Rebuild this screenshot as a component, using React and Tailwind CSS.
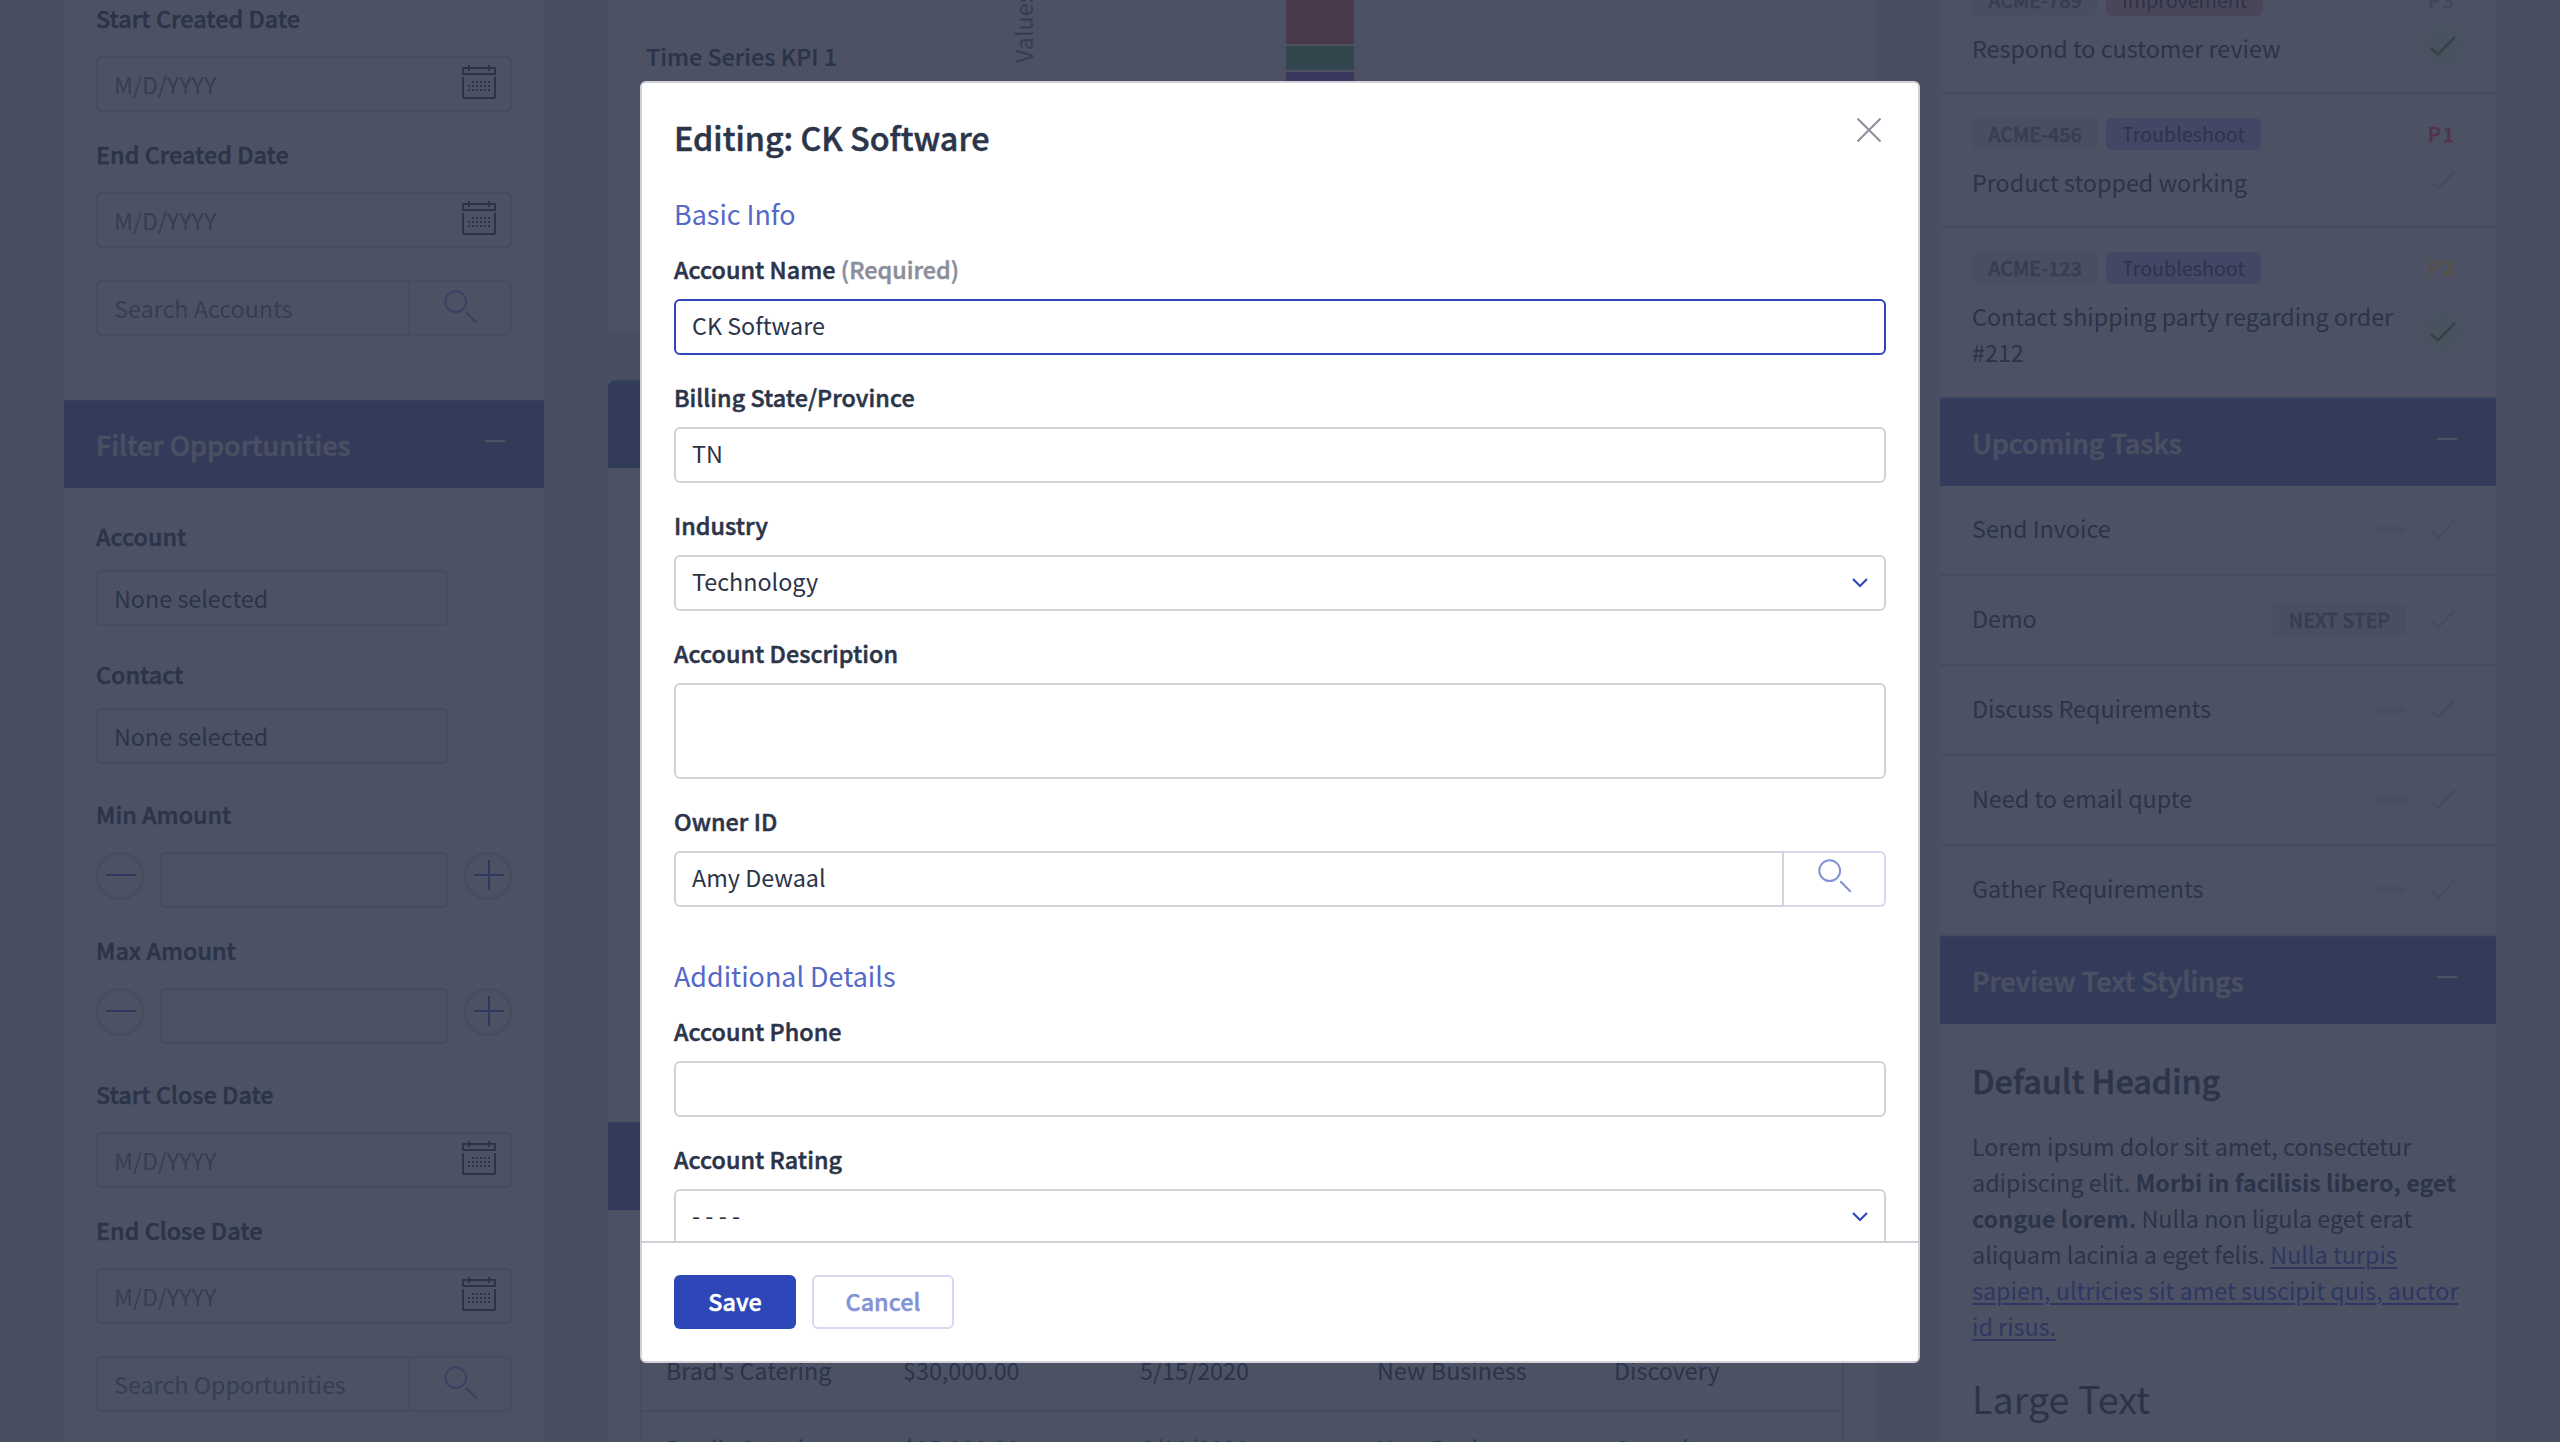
const semi = 'font-medium tracking-[0.04px] [-webkit-text-stroke:0.5px_currentColor]';

function Label({ children, className = '' }) {
  return <div className={`h-8 shrink-0 leading-8 text-[#2b3449] ${semi} ${className}`}>{children}</div>;
}

function CalendarIcon() {
  const dots = [7, 11, 15, 19, 23, 27];
  return (
    <svg width="34" height="34" viewBox="0 0 34 34" fill="none" stroke="#2b3449" strokeWidth="2" className="mb-1">
      <path d="M1 3h32v6H1zM7 0v6M27 0v6M1 12v20.2a.8.8 0 0 0 .8.8h30.4a.8.8 0 0 0 .8-.8V12" />
      <g fill="#2b3449" stroke="none">
        {[17, 21, 25].map((y, r) =>
          dots.slice(r === 0 ? 1 : 0).map((x) => <rect key={`${x}-${y}`} x={x - 1} y={y - 1} width="2" height="2" />)
        )}
      </g>
    </svg>
  );
}

function SearchIcon({ color, className = '' }) {
  return (
    <svg width="34" height="34" viewBox="0 0 34 34" fill="none" stroke={color} strokeWidth="2" strokeLinecap="round" className={className}>
      <circle cx="11.7" cy="11.7" r="10.4" />
      <path d="M22.8 22.8l9.4 9.4" />
    </svg>
  );
}

function Check({ color }) {
  return (
    <svg width="26" height="20" viewBox="0 0 26 20" fill="none" stroke={color} strokeWidth="2.6">
      <path d="M1 12l7 6.4L25 1" />
    </svg>
  );
}

function DateField({ label }) {
  return (
    <>
      <Label>{label}</Label>
      <div className="mt-[22px] flex h-14 items-center justify-between rounded-[6px] border-2 border-[#464b5f] pl-4 pr-[14px] text-[#363e52]">
        <span>M/D/YYYY</span>
        <CalendarIcon />
      </div>
    </>
  );
}

function SearchField({ text }) {
  return (
    <div className="mt-8 flex h-14">
      <div className="flex w-[314px] items-center rounded-l-[6px] border-2 border-[#464b5f] pl-4 text-[#363e52]">{text}</div>
      <div className="flex flex-1 rounded-r-[6px] border-2 border-l-0 border-[#454d65] pl-[34px] pt-2">
        <SearchIcon color="#3a4264" />
      </div>
    </div>
  );
}

function PickField({ label }) {
  return (
    <>
      <Label>{label}</Label>
      <div className="mt-[18px] flex h-14 w-[352px] items-center rounded-[6px] border-2 border-[#464b5f] pl-4 text-[#2b3449]">None selected</div>
    </>
  );
}

function AmountField({ label }) {
  return (
    <>
      <Label>{label}</Label>
      <div className="mt-[22px] flex justify-between">
        <div className="size-12 rounded-full border-2 border-[#464b5f] pl-2 pt-2">
          <svg width="30" height="30" viewBox="0 0 30 30" stroke="#2e3760" strokeWidth="2"><path d="M0 13h30" /></svg>
        </div>
        <div className="h-14 w-72 rounded-[6px] border-2 border-[#464b5f]" />
        <div className="size-12 rounded-full border-2 border-[#464b5f] pl-2 pt-1.5">
          <svg width="30" height="30" viewBox="0 0 30 30" stroke="#2e3760" strokeWidth="2"><path d="M0 15h30M15 0v30" /></svg>
        </div>
      </div>
    </>
  );
}

function PanelHeader({ title }) {
  return (
    <div className="flex h-[88px] shrink-0 justify-between border-t-2 border-[#343f5f] bg-[#323c5a] pl-8 pr-[39px] pt-[23px]">
      <span className="text-[27px] font-medium leading-10 text-[#4a4f62] [-webkit-text-stroke:0.7px_currentColor]">{title}</span>
      <span className="mt-[15px] h-0.5 w-5 bg-[#4c5264]" />
    </div>
  );
}

function Ticket({ id, tag, tagClass, priority, priorityClass, title, done }) {
  return (
    <div className="flex flex-col border-b-2 border-[#464b5f] pb-[26px] pl-8 pr-8 pt-6">
      <div className="flex h-8 text-[19.7px] leading-8">
        <span className="w-[126px] rounded-[6px] bg-[#494e61] text-center font-medium text-[#363e52] [-webkit-text-stroke:0.5px_currentColor]">{id}</span>
        <span className={`ml-2 rounded-[6px] px-4 text-[#2b3449] ${tagClass}`}>{tag}</span>
        <span className={`ml-auto mr-2 font-medium tracking-[2px] [-webkit-text-stroke:0.5px_currentColor] ${priorityClass}`}>{priority}</span>
      </div>
      <div className="mt-[14px] flex items-center justify-between leading-9 text-[#2b3449]">
        <span className="w-[440px]">{title}</span>
        <div className={`-mb-2 -mt-3 flex h-10 w-[42px] items-center justify-center rounded-full ${done ? 'bg-[#48535f]' : ''}`}>
          <Check color={done ? '#334448' : '#464b5f'} />
        </div>
      </div>
    </div>
  );
}

function Task({ title, tag }) {
  return (
    <div className="flex h-[90px] items-center border-b-2 border-[#464b5f] pl-8 pr-8 text-[#2b3449]">
      <span className="mb-1 flex-1 leading-9">{title}</span>
      {tag ? (
        <span className="h-8 rounded-[6px] bg-[#494e61] px-4 text-[19.5px] font-medium leading-8 text-[#363e52] [-webkit-text-stroke:0.5px_currentColor]">{tag}</span>
      ) : (
        <span className="h-2 w-8 rounded-[4px] bg-[#494e61]" />
      )}
      <span className="mb-0.5 ml-4 flex w-[42px] justify-center"><Check color="#464b5f" /></span>
    </div>
  );
}

function Row({ cells }) {
  return (
    <div className="flex h-[78px] shrink-0 border-b-2 border-[#464b5f] pl-6 pt-[18px] leading-9 text-[#2b3449]">
      {cells.map((c) => <span key={c} className="w-[237px] shrink-0">{c}</span>)}
    </div>
  );
}

function Chevron() {
  return (
    <svg width="16" height="10" viewBox="0 0 16 10" fill="none" stroke="#3049b9" strokeWidth="2.2" className="mt-1"><path d="M1 1l7 7 7-7" /></svg>
  );
}

function Field({ label, required, value, focus, select, className = 'mt-[26px]' }) {
  return (
    <div className={`shrink-0 ${className}`}>
      <Label>
        {label}
        {required && <span className="text-[#8b8e9b]"> (Required)</span>}
      </Label>
      <div className={`mt-[14px] flex h-14 items-center justify-between rounded-[6px] border-2 pb-1 pl-4 pr-4 ${focus ? 'border-[#2d47b9]' : 'border-[#d2d2d9]'}`}>
        <span>{value}</span>
        {select && <Chevron />}
      </div>
    </div>
  );
}

function Modal() {
  return (
    <div className="absolute left-[640px] top-[81px] flex h-[1282px] w-[1280px] flex-col overflow-hidden rounded-[6px] border-2 border-[#d0d1d8] bg-white text-[#2b3449]">
      <div className="flex min-h-0 flex-1 flex-col overflow-hidden px-8 pt-8">
        <div className="flex h-11 shrink-0 justify-between">
          <h1 className="text-[32.3px] font-medium leading-[44px] [-webkit-text-stroke:0.5px_currentColor]">Editing: CK Software</h1>
          <svg width="24" height="24" viewBox="0 0 24 24" stroke="#8b8e9b" strokeWidth="2" className="mr-[5px] mt-[3px]"><path d="M.5.5l23 23M23.5.5l-23 23" /></svg>
        </div>
        <h2 className="mt-[37px] shrink-0 text-[26.9px] leading-9 text-[#5468c8]">Basic Info</h2>
        <Field label="Account Name" required value="CK Software" focus className="mt-[21px]" />
        <Field label="Billing State/Province" value="TN" />
        <Field label="Industry" value="Technology" select />
        <Label className="mt-[26px]">Account Description</Label>
        <div className="mt-[14px] h-24 shrink-0 rounded-[6px] border-2 border-[#d2d2d9]" />
        <Label className="mt-[26px]">Owner ID</Label>
        <div className="mt-[14px] flex h-14 shrink-0">
          <div className="flex w-[1110px] items-center rounded-l-[6px] border-2 border-[#d2d2d9] pb-1 pl-4">Amy Dewaal</div>
          <div className="flex-1 rounded-r-[6px] border-2 border-l-0 border-[#d5d9ef] pl-[34px] pt-1.5">
            <SearchIcon color="#8492d6" />
          </div>
        </div>
        <h2 className="mt-[51px] shrink-0 text-[26.9px] leading-9 text-[#5468c8]">Additional Details</h2>
        <Field label="Account Phone" className="mt-[21px]" />
        <Field label="Account Rating" value="- - - -" select />
      </div>
      <div className="flex h-[120px] shrink-0 gap-4 border-t-2 border-[#d0d1d8] px-8 pt-8">
        <div className={`h-[54px] w-[122px] rounded-[6px] bg-[#2d47b9] text-center leading-[52px] text-white ${semi}`}>Save</div>
        <div className={`h-[54px] w-[142px] rounded-[6px] border-2 border-[#d5d9ef] text-center leading-[48px] text-[#8492d6] ${semi}`}>Cancel</div>
      </div>
    </div>
  );
}

export default function App() {
  return (
    <div className="relative flex h-[1442px] w-[2560px] gap-16 overflow-hidden bg-[#494e61] px-16 font-['Noto_Sans_CJK_SC','Noto_Sans',sans-serif] text-[23.33px]">
      <aside className="flex w-[480px] shrink-0 flex-col bg-[#4c5264]">
        <div className="h-[400px] shrink-0 px-8 pt-0.5">
          <DateField label="Start Created Date" />
          <div className="h-[26px]" />
          <DateField label="End Created Date" />
          <SearchField text="Search Accounts" />
        </div>
        <PanelHeader title="Filter Opportunities" />
        <div className="px-8 pt-8">
          <PickField label="Account" />
          <div className="h-8" />
          <PickField label="Contact" />
          <div className="h-[34px]" />
          <AmountField label="Min Amount" />
          <div className="h-[26px]" />
          <AmountField label="Max Amount" />
          <div className="h-[34px]" />
          <DateField label="Start Close Date" />
          <div className="h-[26px]" />
          <DateField label="End Close Date" />
          <SearchField text="Search Opportunities" />
        </div>
      </aside>

      <main className="flex w-[1268px] shrink-0 flex-col">
        <div className="flex h-[332px] shrink-0 items-start rounded-b-[8px] bg-[#4c5264] pl-[38px]">
          <div className="w-[366px] pt-10 font-medium leading-8 text-[#2b3449] [-webkit-text-stroke:0.2px_currentColor]">Time Series KPI 1</div>
          <div className="-mt-1 h-[67px] w-[274px] leading-[22px] text-[#363c50]">
            <span className="block h-[67px] w-[22px] rotate-180 whitespace-nowrap [writing-mode:vertical-rl]">Values</span>
          </div>
          <div className="flex w-[68px] flex-col gap-0.5">
            <div className="h-11 bg-[#483a4a]" />
            <div className="h-6 bg-[#32464e]" />
            <div className="h-10 bg-[#3a385f]" />
          </div>
        </div>
        <div className="mt-12 h-[88px] shrink-0 rounded-t-[8px] border-t-2 border-[#343f5f] bg-[#323c5a]" />
        <div className="h-[654px] shrink-0 bg-[#4c5264]" />
        <div className="h-[88px] shrink-0 border-t-2 border-[#343f5f] bg-[#323c5a]" />
        <div className="flex-1 overflow-hidden bg-[#4c5264] px-8 pt-[124px]">
          <div className="flex w-[1204px] flex-col border-x-2 border-[#464b5f]">
            <Row cells={["Brad's Catering", '$30,000.00', '5/15/2020', 'New Business', 'Discovery']} />
            <Row cells={["Brad's Catering", '$25,000.00', '6/11/2020', 'New Business', 'Consult']} />
          </div>
        </div>
      </main>

      <aside className="flex w-[556px] shrink-0 flex-col bg-[#4c5264]">
        <div className="-mt-10 shrink-0">
          <Ticket id="ACME-789" tag="Improvement" tagClass="bg-[#4a4659]" priority="P3" priorityClass="text-[#41475b]" title="Respond to customer review" done />
          <Ticket id="ACME-456" tag="Troubleshoot" tagClass="bg-[#434664]" priority="P1" priorityClass="text-[#533245]" title="Product stopped working" />
          <Ticket id="ACME-123" tag="Troubleshoot" tagClass="bg-[#434664]" priority="P2" priorityClass="text-[#575046]" title="Contact shipping party regarding order #212" done />
        </div>
        <PanelHeader title="Upcoming Tasks" />
        <Task title="Send Invoice" />
        <Task title="Demo" tag="NEXT STEP" />
        <Task title="Discuss Requirements" />
        <Task title="Need to email qupte" />
        <Task title="Gather Requirements" />
        <PanelHeader title="Preview Text Stylings" />
        <div className="px-8 pt-[34px] text-[#2b3449]">
          <h1 className="text-[32.3px] font-medium leading-[44px] [-webkit-text-stroke:0.5px_currentColor]">Default Heading</h1>
          <p className="mt-[26px] whitespace-nowrap leading-9">
            Lorem ipsum dolor sit amet, consectetur
            <br />
            adipiscing elit. <b className="font-bold">Morbi in facilisis libero, eget</b>
            <br />
            <b className="font-bold">congue lorem.</b> Nulla non ligula eget erat
            <br />
            aliquam lacinia a eget felis.{' '}
            <a className="text-[#2e3762] underline decoration-2 underline-offset-[3px]">
              Nulla turpis
              <br />
              sapien, ultricies sit amet suscipit quis, auctor
              <br />
              id risus.
            </a>
          </p>
          <p className="mt-7 text-[37.7px] leading-[52px]">Large Text</p>
        </div>
      </aside>

      <Modal />
    </div>
  );
}
